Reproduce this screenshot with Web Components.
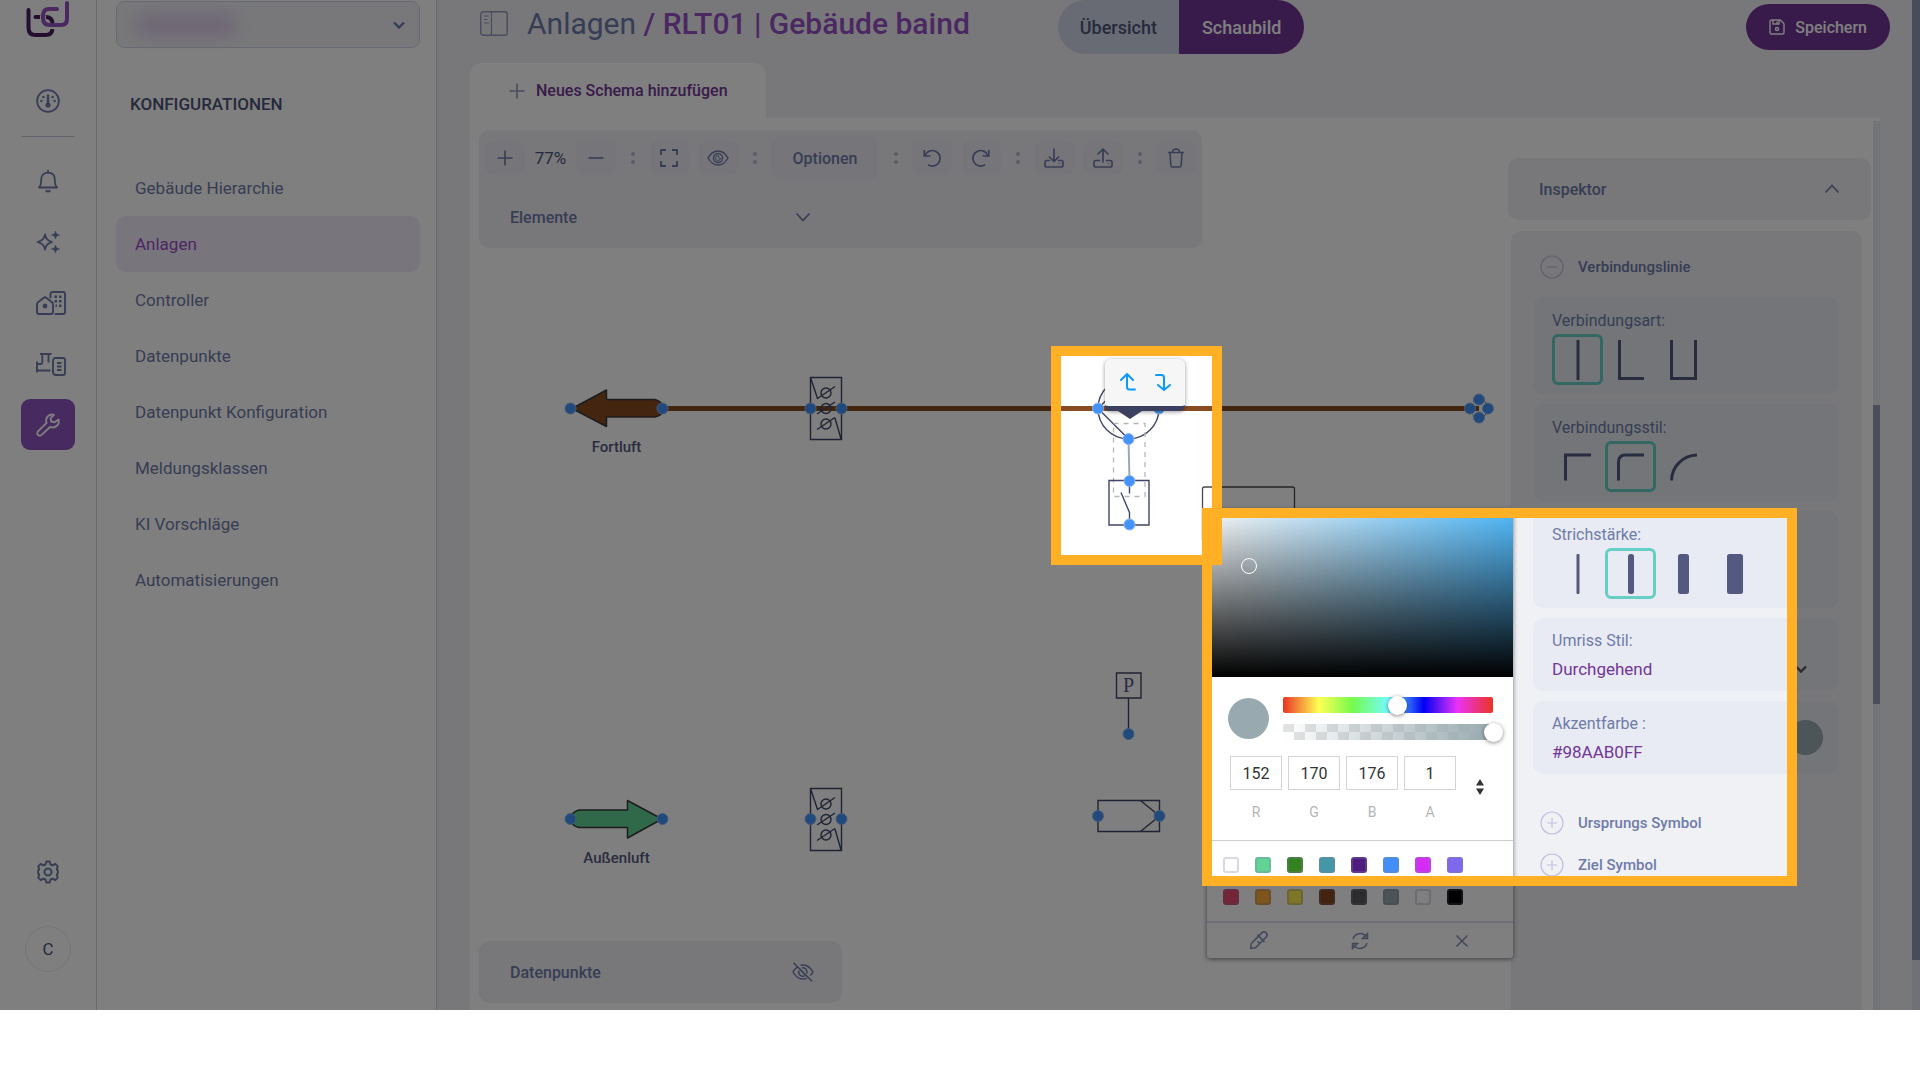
<!DOCTYPE html>
<html lang="de">
<head>
<meta charset="utf-8">
<title>Anlagen – Schaubild</title>
<style>
  :root {
    --ink: #6f7ba8;
    --ink-dark: #4d5479;
    --purple: #723696;
    --purple-light: #9650c4;
    --surface: #f0f1f5;
    --card: #e8ebf3;
    --line: #cfd6e8;
    --dot: #4393f9;
    --teal: #66cfc3;
  }
  body { margin: 0; background: #fff; font-family: Roboto, "Liberation Sans", sans-serif; font-size: 16px; color: var(--ink); }
</style>
</head>
<body>
<app-shell>
  <nav-rail></nav-rail>
  <side-nav></side-nav>
  <app-main></app-main>
  <spot-light slot="overlay"></spot-light>
</app-shell>

<script>
const RESET = `
  :host, *, *::before, *::after { box-sizing: border-box; }
  button, input, select { font: inherit; color: inherit; border: 0; background: none; margin: 0; padding: 0; border-radius: 0; outline: 0; }
  a { color: inherit; text-decoration: none; }
`;

function define(name, markup, setup) {
  const template = document.createElement('template');
  customElements.define(name, class extends HTMLElement {
    connectedCallback() {
      if (this.shadowRoot) return;
      template.innerHTML = typeof markup === 'function' ? markup(this) : markup;
      const root = this.attachShadow({ mode: 'open' });
      root.innerHTML = `<style>${RESET}</style>`;
      root.append(template.content.cloneNode(true));
      if (setup) setup(this, root);
    }
  });
}

/* ---------- icons: [viewBox width, viewBox height, stroke width, body] ---------- */
const ICONS = {
  logo: [44, 38, 4, `<g stroke-linecap="round" stroke-linejoin="round"><path stroke="#4b1f62" d="M2.500 10v18q0 7 7 7h10q7 0 7-7v-4q0-7-7-7H9.500"/><path stroke="#fff" stroke-width="6" d="M17 17v2q0 7 7 7h12"/><path stroke="#9650c4" d="M31 9h-8q-6 0-6 7v2q0 7 7 7h11q6 0 6-6V3"/></g>`],
  gauge: [24, 24, 1.8, `<circle cx="12" cy="12" r="10.900"/><circle cx="12" cy="16" r="1.700" fill="currentColor"/><path stroke-width="2.400" stroke-linecap="round" d="M12 6.500v9"/><g fill="currentColor" stroke="none"><circle cx="5.400" cy="12" r="1.200"/><circle cx="7.400" cy="8" r="1.200"/><circle cx="16.600" cy="8" r="1.200"/><circle cx="18.600" cy="12" r="1.200"/></g>`],
  bell: [24, 24, 1.8, `<path stroke-linejoin="round" d="M3 18.500c1.500-1.500 2.200-3.500 2.200-8C5.200 6 8 3.600 12 3.600s6.800 2.400 6.800 6.900c0 4.500.7 6.500 2.200 8z"/><path stroke-linecap="round" d="M12 1.600v1.500M10.200 21.800q1.800 1.400 3.600 0"/>`],
  sparkle: [24, 24, 1.8, `<path stroke-linejoin="round" d="M9 4.500c1 4.500 2.500 6 7 7.500-4.500 1.500-6 3-7 7.500C8 15 6.500 13.500 1.500 12 6.500 10.500 8 9 9 4.500z"/><path fill="currentColor" stroke-width=".6" d="M19.500 1c.5 2.500 1.200 3.300 4 4-2.800.7-3.500 1.500-4 4-.5-2.500-1.200-3.300-4-4 2.800-.7 3.500-1.500 4-4zM19.500 15c.5 2.500 1.200 3.300 4 4-2.800.7-3.500 1.500-4 4-.5-2.500-1.200-3.300-4-4 2.800-.7 3.500-1.500 4-4z"/>`],
  buildings: [30, 24, 1.9, `<g stroke-linejoin="round"><path d="M1 13.500q0-1.500 1-2.300l5.500-4.300q1.500-1.200 3 0l5.500 4.300q1 .8 1 2.300V21q0 2-2 2H3q-2 0-2-2z"/><path stroke-linecap="round" d="M14.500 6.500V3q0-2 2-2H27q2 0 2 2v18q0 2-2 2h-7.500"/></g><g fill="currentColor" stroke="none"><circle cx="9" cy="15" r="2.400"/><path d="M18.500 4.500H21V7h-2.500zM23 4.500h2.500V7H23zM18.500 9H21v2.500h-2.500zM23 9h2.500v2.500H23zM19.500 13.500H21V16h-1.500zM23 13.500h2.500V16H23z"/></g>`],
  plant: [30, 24, 1.9, `<path d="M4 2h11.500M6.300 2v8.500q0 1.500-1.500 1.500H1M12.500 2v8.500M1 9.500v11M1 18.500h13.500"/><path stroke-linejoin="round" d="M18.500 6H27q2 0 2 2v13q0 2-2 2h-7q-2.500 0-3-2.500V9q0-2 1.500-3zM21 11h4.500M21 14.500h4.500M21 18h4.500"/>`],
  wrench: [24, 24, 1.9, `<path stroke-linejoin="round" d="M22.500 6.500a6 6 0 0 1-8.200 7.300l-8.700 8.100a2.500 2.500 0 0 1-3.600-3.500l8.600-8.600A6 6 0 0 1 18 1.800l-3.400 3.400.6 3.300 3.500.8z"/>`],
  gear: [24, 24, 2, `<circle cx="12" cy="12" r="3.500"/><path stroke-linejoin="round" d="M10.300 1.500h3.400l.8 3 2 .9 2.700-1.500 2.500 2.500-.8 2.900.9 1.500v2.400l-.9 1.500.8 2.900-2.500 2.500-2.700-1.500-2 .9-.8 3h-3.400l-.8-3-2-.9-2.700 1.500-2.500-2.500.8-2.900-.9-1.500v-2.400l.9-1.500-.8-2.900 2.500-2.500 2.700 1.500 2-.9z"/>`],
  panel: [28, 25, 1.4, `<rect x=".8" y=".8" width="26.400" height="23.400" rx="2.500"/><path d="M11.500 1v23M4 5h5M4 8.500h3.500M4 12h5" stroke-width="1.200"/>`],
  plus: [16, 16, 1.6, `<path d="M8 .5v15M.5 8h15"/>`],
  minus: [16, 16, 1.6, `<path d="M.5 8h15"/>`],
  expand: [18, 18, 1.8, `<path d="M1 6V1h5M12 1h5v5M17 12v5h-5M6 17H1v-5"/>`],
  eye: [22, 18, 1.5, `<path stroke-linejoin="round" d="M1 9c2.500-4.500 6-7 10-7s7.500 2.500 10 7c-2.500 4.500-6 7-10 7S3.500 13.500 1 9z"/><circle cx="11" cy="9" r="4.500"/><path d="M11.300 6.500a2.500 2.500 0 1 0 2.200 3q-2.200.2-2.200-3z" stroke-width="1"/>`],
  eyeoff: [22, 20, 1.5, `<path d="M5.500 4.800C3.700 6 2.200 7.800 1 10c2.500 4.500 6 7 10 7q2 0 4-.9M8.500 3.300Q9.700 3 11 3c4 0 7.500 2.500 10 7q-1.100 2-2.700 3.500"/><path d="M14.800 11.500a4.200 4.200 0 0 0-5-5.500M7 8.500a4.200 4.200 0 0 0 6 5.200M1.500.8l18.500 18.500M8.500 8l5 5"/>`],
  undo: [18, 18, 1.7, `<path d="M1.200 1v6h6.300"/><path d="M2 6.700A7.800 7.800 0 1 1 5 15.800"/>`],
  redo: [18, 18, 1.7, `<path d="M16.800 1v6h-6.300"/><path d="M16 6.700A7.800 7.800 0 1 0 13 15.800"/>`],
  download: [20, 20, 1.7, `<path stroke-linejoin="round" d="M10 .5v13M5 8.500l5 5 5-5M6 12.500H2.800Q1 12.500 1 14.300v2.900Q1 19 2.800 19h14.400q1.800 0 1.800-1.800v-2.900q0-1.800-1.800-1.800H14"/><circle cx="15.800" cy="15.800" r=".3" stroke-width="1"/>`],
  upload: [20, 20, 1.7, `<path stroke-linejoin="round" d="M10 14.500V1M4.500 6.500L10 1l5.500 5.500M7 12.500H2.800Q1 12.500 1 14.300v2.900Q1 19 2.800 19h14.400q1.800 0 1.800-1.800v-2.900q0-1.800-1.800-1.800H13"/><circle cx="15.800" cy="15.800" r=".3" stroke-width="1"/>`],
  trash: [18, 20, 1.6, `<path stroke-linejoin="round" d="M1 4.500h16M5.500 4.500Q5.500 1 9 1t3.500 3.500M3 4.500l.8 13q.1 1.500 1.600 1.500h7.200q1.500 0 1.600-1.500l.8-13"/>`],
  down: [22, 16, 1.6, `<path d="M4.500 4.500L11 11.500l6.500-7"/>`],
  up: [22, 16, 1.6, `<path d="M4.500 11.500L11 4.500l6.500 7"/>`],
  chevron: [12, 12, 2.4, `<path d="M1 3.500l5 5 5-5"/>`],
  save: [16, 16, 1.4, `<path stroke-linejoin="round" d="M1 2.500Q1 1 2.500 1h8.800L15 4.700v8.800q0 1.500-1.500 1.500h-11Q1 15 1 13.500zM4 1v4h6V1M8 5V2.500"/><circle cx="8" cy="10" r="1.500"/>`],
  circleminus: [24, 24, 1.2, `<circle cx="12" cy="12" r="11"/><path d="M7 12h10"/>`],
  circleplus: [24, 24, 1.2, `<circle cx="12" cy="12" r="11"/><path d="M7 12h10M12 7v10"/>`],
  dropper: [18, 18, 1.5, `<g transform="rotate(45 9 9)" stroke-linejoin="round" stroke-linecap="round"><path d="M6 5V.5a3 3 0 0 1 6 0V5M4.500 5h9M6 5.500v10L9 19.500l3-4v-10M12 9.500H9.500"/></g>`],
  refresh: [18, 18, 1.5, `<path d="M2 7A7.300 7.300 0 0 1 15.500 5.500M16 11A7.300 7.300 0 0 1 2.500 12.500"/><path d="M16.500 1.500v5h-5zM1.500 16.500v-5h5z"/>`],
  close: [14, 14, 1.5, `<path d="M1.500 1.500l11 11M12.500 1.500l-11 11"/>`],
  sort: [8, 16, 0, `<path fill="currentColor" d="M0 6.500L4 0l4 6.500zM0 9.500L4 16l4-6.500z"/>`],
  straight: [26, 40, 3, `<path d="M13 0v40"/>`],
  corner: [26, 40, 3, `<path d="M1.500 0v38.500H26"/>`],
  ushape: [27, 40, 3, `<path d="M1.500 0v38.500h24V0"/>`],
  sharp: [27, 40, 3, `<path d="M1.500 33.500V8H27"/>`],
  rounded: [27, 40, 3, `<path d="M1.500 33.500V15q0-7 7-7H27"/>`],
  curve: [27, 40, 3, `<path d="M1.500 33.500C2 20 12 8.500 27 8"/>`],
  w1: [26, 40, 0, `<rect x="11.500" width="3" height="40" rx="1" fill="currentColor"/>`],
  w2: [26, 40, 0, `<rect x="10" width="6" height="40" rx="2.500" fill="currentColor"/>`],
  w3: [26, 40, 0, `<rect x="7" width="11" height="40" rx="2.500" fill="currentColor"/>`],
  w4: [26, 40, 0, `<rect x="3" width="16" height="40" rx="2.500" fill="currentColor"/>`],
  branchup: [16, 18, 2, `<path stroke-linecap="round" stroke-linejoin="round" d="M1 6l6-6 6 6M7 0v13q0 2.500 2.500 2.500H15"/>`],
  branchdown: [16, 18, 2, `<path stroke-linecap="round" stroke-linejoin="round" d="M3 11l6 5 6-5M9 16V3.500q0-2.500-2.500-2.500H1"/>`],
};
define('app-icon', el => {
  const [w, h, sw, body] = ICONS[el.getAttribute('name')];
  return `<style>:host{display:inline-flex;flex:none}svg{display:block;overflow:visible}</style>
  <svg width="${w}" height="${h}" viewBox="0 0 ${w} ${h}" fill="none" stroke="${sw ? 'currentColor' : 'none'}" stroke-width="${sw}" aria-hidden="true">${body}</svg>`;
});

/* ---------- shell ---------- */
define('app-shell', `
<style>
  :host { display: flex; position: relative; height: calc(100vh - 70px); overflow: hidden; }
</style>
<slot></slot><slot name="overlay"></slot>`);

define('nav-rail', `
<style>
  :host { flex: none; display: flex; width: 97px; border-right: 1px solid var(--line); }
  nav { flex: 1; display: flex; flex-direction: column; align-items: center; padding-bottom: 38px; }
  a { display: flex; align-items: center; width: 54px; height: 51px; margin-bottom: 10px; padding-left: 15px; border-radius: 9px; }
  .home { height: 33px; margin-bottom: 42px; padding-left: 5px; align-items: flex-start; }
  hr { width: 54px; border: 0; border-top: 1px solid #c5c9d6; margin: 0 0 18px; }
  .active { background: #8e54be; color: #fff; }
  .gear { margin-top: auto; margin-bottom: 29px; }
  .avatar { width: 46px; height: 46px; border: 1px solid #ececec; border-radius: 50%; color: var(--ink-dark); font-size: 17px; }
</style>
<nav aria-label="Hauptnavigation">
  <a class="home" href="#"><app-icon name="logo"></app-icon></a>
  <a href="#"><app-icon name="gauge"></app-icon></a>
  <hr>
  <a href="#"><app-icon name="bell"></app-icon></a>
  <a href="#"><app-icon name="sparkle"></app-icon></a>
  <a href="#"><app-icon name="buildings"></app-icon></a>
  <a href="#"><app-icon name="plant"></app-icon></a>
  <a class="active" href="#"><app-icon name="wrench"></app-icon></a>
  <a class="gear" href="#"><app-icon name="gear"></app-icon></a>
  <button class="avatar">C</button>
</nav>`);

define('side-nav', `
<style>
  :host { flex: none; display: block; width: 340px; padding: 1px 16px 0 19px; border-right: 1px solid var(--line); }
  .site { position: relative; display: flex; align-items: center; }
  select { appearance: none; width: 100%; height: 47px; border: 1px solid var(--line); border-radius: 8px; background: var(--surface); }
  .blur { position: absolute; left: 20px; width: 100px; height: 18px; border-radius: 8px; background: #d8c2e8; filter: blur(9px); }
  .site app-icon { position: absolute; right: 15px; }
  h2 { margin: 43px 0 43px 14px; font-size: 17px; line-height: 26px; font-weight: 500; color: var(--ink-dark); }
  nav { display: flex; flex-direction: column; }
  a { display: block; line-height: 56px; padding: 0 19px; border-radius: 9px; font-size: 17px; }
  .active { background: #f3eafa; color: var(--purple-light); }
</style>
<label class="site"><select aria-label="Standort"></select><span class="blur"></span><app-icon name="chevron"></app-icon></label>
<h2>KONFIGURATIONEN</h2>
<nav aria-label="Konfigurationen">
  <a href="#">Gebäude Hierarchie</a>
  <a href="#" class="active">Anlagen</a>
  <a href="#">Controller</a>
  <a href="#">Datenpunkte</a>
  <a href="#">Datenpunkt Konfiguration</a>
  <a href="#">Meldungsklassen</a>
  <a href="#">KI Vorschläge</a>
  <a href="#">Automatisierungen</a>
</nav>`);

/* ---------- main column ---------- */
define('app-main', `
<style>
  :host { flex: 1; min-width: 0; display: flex; background: var(--surface); }
  .col { flex: 1; min-width: 0; display: flex; flex-direction: column; }
  .tab { align-self: flex-start; display: flex; align-items: center; gap: 11px; height: 55px; margin-left: 33px; padding: 0 38px 0 39px; border-radius: 12px 12px 0 0; background: #fff; color: var(--purple); font-weight: 500; }
  .tab app-icon { color: #8f9bbd; }
  schema-panel { flex: 1; margin: 0 32px 0 33px; }
  .bar { flex: none; width: 8px; background: #dfe3ee; }
  .bar i { display: block; height: 95%; background: #8e98b2; }
</style>
<div class="col">
  <page-header></page-header>
  <button class="tab"><app-icon name="plus"></app-icon>Neues Schema hinzufügen</button>
  <schema-panel></schema-panel>
</div>
<div class="bar"><i></i></div>`);

define('page-header', `
<style>
  :host { flex: none; display: flex; align-items: center; height: 63px; padding: 0 22px 9px 43px; }
  .title { display: flex; align-items: center; gap: 19px; padding-bottom: 7px; }
  .title app-icon { color: #8f9bbd; }
  h1 { margin: 0; font-size: 30px; line-height: 36px; font-weight: 400; white-space: nowrap; }
  b { font-weight: 500; color: var(--purple-light); }
  .seg { display: flex; margin-left: 88px; font-size: 18px; font-weight: 500; }
  .seg button { height: 54px; padding: 0 22px; border-radius: 27px 0 0 27px; background: #d2d7e8; color: var(--ink-dark); }
  .seg button + button { padding: 0 23px; border-radius: 0 27px 27px 0; background: var(--purple); color: #fff; }
  .save { display: flex; align-items: center; gap: 10px; height: 46px; margin-left: auto; padding: 0 23px; border-radius: 23px; background: var(--purple); color: #fff; font-weight: 500; }
</style>
<div class="title"><app-icon name="panel"></app-icon><h1>Anlagen <b>/ RLT01 | Gebäude baind</b></h1></div>
<div class="seg"><button>Übersicht</button><button>Schaubild</button></div>
<button class="save"><app-icon name="save"></app-icon>Speichern</button>`);

define('schema-panel', `
<style>
  :host { position: relative; display: flex; min-height: 0; background: #fff; }
  schema-canvas { position: absolute; inset: 0; }
  .left { position: relative; flex: 1; display: flex; flex-direction: column; align-items: flex-start; justify-content: space-between; padding: 12px 9px 7px; }
  inspector-panel { position: relative; flex: none; width: 363px; margin: 40px 2px 0 0; }
  .bar { flex: none; width: 7px; margin-top: 3px; background: #e6e8f1; display: flex; flex-direction: column; }
  .bar i { margin-top: 284px; height: 299px; background: #959db5; }
  color-picker { position: absolute; right: 367px; top: 391px; }
</style>
<schema-canvas></schema-canvas>
<div class="left"><schema-toolbar></schema-toolbar><fold-bar icon="eyeoff">Datenpunkte</fold-bar></div>
<inspector-panel></inspector-panel>
<div class="bar"><i></i></div>
<color-picker></color-picker>`);

define('fold-bar', el => `
<style>
  :host { display: block; width: 363px; border-radius: 10px; background: var(--surface); }
  button { display: flex; align-items: center; justify-content: space-between; width: 100%; height: 62px; padding: 0 28px 0 31px; font-weight: 500; }
</style>
<button><slot></slot><app-icon name="${el.getAttribute('icon')}"></app-icon></button>`);

define('tool-button', el => `
<style>:host{display:block}button{display:flex;align-items:center;justify-content:center;width:40px;height:34px;border-radius:8px;background:#ecedf4}</style>
<button aria-label="${el.getAttribute('label')}"><app-icon name="${el.getAttribute('icon')}"></app-icon></button>`);

define('tool-separator', `
<style>:host{display:flex;flex-direction:column;align-items:center;gap:4px;width:15px}i{width:4px;height:4px;border-radius:50%;background:#b3bbd0}</style>
<i></i><i></i>`);

define('schema-toolbar', `
<style>
  :host { display: flex; flex-direction: column; gap: 6px; padding-top: 6px; border-radius: 10px; background: var(--surface); }
  .row { display: flex; align-items: center; gap: 9px; padding: 0 6px; }
  output { width: 33px; text-align: center; font-size: 17px; color: var(--ink-dark); }
  .opt { width: 108px; height: 44px; border-radius: 10px; background: #ecedf4; font-weight: 500; }
</style>
<div class="row">
  <tool-button icon="plus" label="Vergrößern"></tool-button>
  <output>77%</output>
  <tool-button icon="minus" label="Verkleinern"></tool-button>
  <tool-separator></tool-separator>
  <tool-button icon="expand" label="Vollbild"></tool-button>
  <tool-button icon="eye" label="Vorschau"></tool-button>
  <tool-separator></tool-separator>
  <button class="opt">Optionen</button>
  <tool-separator></tool-separator>
  <tool-button icon="undo" label="Rückgängig"></tool-button>
  <tool-button icon="redo" label="Wiederholen"></tool-button>
  <tool-separator></tool-separator>
  <tool-button icon="download" label="Importieren"></tool-button>
  <tool-button icon="upload" label="Exportieren"></tool-button>
  <tool-separator></tool-separator>
  <tool-button icon="trash" label="Löschen"></tool-button>
</div>
<fold-bar icon="down">Elemente</fold-bar>`);

/* ---------- diagram ---------- */
const dots = pts => pts.map(([x, y]) => `<circle class="dot" cx="${x}" cy="${y}" r="5.500"/>`).join('');
const damper = y => `<g transform="translate(810 ${y})"><path class="ln" d="M.5.500h31v62H.5zM.5.500l7 21L25 9.500M7 37l18-12M7 52.500l18-12M25 41l6 21"/><circle class="ln" cx="16" cy="16" r="5"/><circle class="ln" cx="16" cy="31.500" r="5"/><circle class="ln" cx="16" cy="47" r="5"/></g>`;
define('schema-canvas', `
<style>
  :host { display: block; overflow: hidden; }
  svg { display: block; width: 100%; height: 100%; }
  .dot { fill: var(--dot); stroke: #8fb8ee; stroke-width: 1; }
  .ln { fill: none; stroke: #3f4666; stroke-width: 1.4; }
  .pipe { stroke: #884c20; stroke-width: 5; }
  text { font-size: 15px; font-weight: 500; fill: #545880; text-anchor: middle; }
  .sym { font-family: "Liberation Serif", serif; font-size: 20px; font-weight: 400; }
  .tip { position: absolute; left: 635px; top: 241px; display: flex; flex-direction: column; align-items: center; }
  .tip div { display: flex; align-items: center; justify-content: center; gap: 19px; width: 80px; height: 52px; border-radius: 6px; border-bottom: 5px solid #3c4060; background: #f6f6f7; color: #0a99ff; box-shadow: 0 1px 4px #0006; }
  .tip::after { content: ""; margin-left: -30px; border: 12px solid transparent; border-top: 8px solid #3c4060; border-bottom: 0; }
</style>
<svg role="img" aria-label="Schaubild der Anlage">
  <g transform="translate(-470 -118)">
    <path class="pipe" d="M663 408.500H1479"/>
    <path fill="#884a1f" stroke="#3a3a3a" stroke-width="1.500" stroke-linejoin="round" d="M572 408.500l34.500-18.500v9.500H655q8 2 8 9t-8 8.500h-48.500v9.500z"/>
    <text x="616.500" y="452">Fortluft</text>
    ${damper(377)}
    ${dots([[570.5, 408.5], [662.5, 408.5], [810.5, 408.5], [841.5, 408.5]])}
    <circle cx="1479" cy="408.500" r="9" fill="none" stroke="#3a3a3a" stroke-dasharray="3 3"/>
    ${dots([[1470, 408.5], [1488, 408.5], [1479, 399.500], [1479, 417.500]])}

    <circle class="ln" cx="1128.500" cy="408.500" r="30.500"/>
    <path class="ln" d="M1128.500 439L1098 408.500L1128.500 378"/>
    <path d="M1128.500 439L1129.500 481" stroke="#98aab0" stroke-width="2"/>
    <rect x="1113.500" y="423.500" width="31.500" height="73" fill="none" stroke="#b5b5bd" stroke-width="1.300" stroke-dasharray="5 5"/>
    <path class="ln" d="M1109 480.500h40v44.500h-40zM1129.500 480.500v13M1121 492.500l8.500 20v12.500"/>
    ${dots([[1098, 408.5], [1159, 408.5], [1128.500, 439], [1129.500, 481], [1129.500, 524.500]])}
    <rect x="1202.500" y="487" width="92" height="54" rx="2" fill="none" stroke="#4a4a4e" stroke-width="1.300"/>

    <path class="ln" d="M1116.500 673h24.500v25h-24.500zM1128.500 698v36"/>
    <text class="sym" x="1128.500" y="692">P</text>
    <path class="ln" d="M1098 800.500h61.500v31H1098zM1140.500 800.500l19 15.500-19 15.500"/>
    ${dots([[1128.500, 734], [1098, 816], [1159.500, 816]])}

    <path fill="#61d394" stroke="#3a3a3a" stroke-width="1.500" stroke-linejoin="round" d="M662 819l-34.500-18.500v9.500H579q-8 2-8 9t8 8.500h48.500v10.500z"/>
    <text x="616.500" y="863">Außenluft</text>
    ${damper(788)}
    ${dots([[570.5, 819], [662.5, 819], [810.5, 819], [841.5, 819]])}
  </g>
</svg>
<div class="tip"><div><app-icon name="branchup"></app-icon><app-icon name="branchdown"></app-icon></div></div>`);

/* ---------- inspector ---------- */
define('option-group', el => {
  const group = el.getAttribute('label');
  const selected = Number(el.getAttribute('selected'));
  return `
<style>
  :host { display: block; }
  fieldset { min-width: 0; margin: 0; height: 97px; padding: 0 19px; border: 0; border-radius: 10px; background: var(--card); }
  legend { float: left; width: 100%; padding: 13px 0 2px; line-height: 22px; }
  .opts { clear: both; display: flex; gap: 2px; }
  label { display: flex; align-items: center; justify-content: center; width: 51px; height: 51px; border: 3px solid transparent; border-radius: 6px; color: #53597f; }
  label:has(:checked) { border-color: var(--teal); }
  input { appearance: none; position: absolute; }
</style>
<fieldset><legend>${group}:</legend><div class="opts">${el.getAttribute('icons').split(' ').map((n, i) =>
    `<label><input type="radio" name="o" aria-label="${group} ${i + 1}"${i === selected ? ' checked' : ''}><app-icon name="${n}"></app-icon></label>`).join('')}</div></fieldset>`;
});

define('section-toggle', el => `
<style>
  :host { display: block; }
  button { display: flex; align-items: center; gap: 14px; height: 24px; padding: 0; font-size: 15px; font-weight: 500; }
  app-icon { color: #c3bfe0; }
</style>
<button><app-icon name="${el.getAttribute('icon')}"></app-icon><slot></slot></button>`);

define('inspector-panel', `
<style>
  :host { display: flex; flex-direction: column; gap: 11px; }
  fold-bar { width: 100%; }
  .body { flex: 1; display: flex; flex-direction: column; gap: 10px; margin: 0 9px 0 3px; padding: 24px 23px 0 22px; border-radius: 10px 10px 0 0; background: var(--surface); }
  section-toggle { padding-left: 7px; }
  .first { margin-bottom: 8px; }
  .field { position: relative; display: flex; align-items: center; height: 73px; padding: 0 16px 0 19px; border-radius: 10px; background: var(--card); }
  .field label { flex: 1; display: flex; flex-direction: column; gap: 4px; padding-top: 2px; }
  .field span { line-height: 22px; }
  select, input { appearance: none; width: 100%; height: 26px; font-size: 17px; color: var(--purple); }
  .field app-icon { color: #55555c; padding-top: 28px; padding-right: 16px; }
  .chip { width: 35px; height: 35px; border-radius: 50%; background: #98aab0; }
  .more { display: flex; flex-direction: column; gap: 18px; padding-top: 27px; }
</style>
<fold-bar icon="up">Inspektor</fold-bar>
<div class="body">
  <section-toggle class="first" icon="circleminus">Verbindungslinie</section-toggle>
  <option-group label="Verbindungsart" icons="straight corner ushape" selected="0"></option-group>
  <option-group label="Verbindungsstil" icons="sharp rounded curve" selected="1"></option-group>
  <option-group label="Strichstärke" icons="w1 w2 w3 w4" selected="1"></option-group>
  <div class="field"><label><span>Umriss Stil:</span><select><option>Durchgehend</option></select></label><app-icon name="chevron"></app-icon></div>
  <div class="field"><label><span>Akzentfarbe :</span><input value="#98AAB0FF"></label><button class="chip" aria-label="Farbe wählen"></button></div>
  <div class="more">
    <section-toggle icon="circleplus">Ursprungs Symbol</section-toggle>
    <section-toggle icon="circleplus">Ziel Symbol</section-toggle>
  </div>
</div>`);

/* ---------- colour picker ---------- */
const SWATCHES = ['#ffffff', '#61d394', '#35801f', '#4397a6', '#4f1b7e', '#4190f9', '#d62cf5', '#7d68ee',
  '#ec4a72', '#fdac38', '#faea4e', '#84461e', '#585858', '#98a8ae', '#ffffff', '#000000'];
define('color-picker', `
<style>
  :host { display: block; width: 306px; background: #fff; border-radius: 3px; box-shadow: 0 1px 5px #0008; }
  .field { position: relative; height: 168px; border-radius: 3px 3px 0 0; background: linear-gradient(to top, #000, transparent), linear-gradient(to right, #fff, #55beff); }
  .field i { position: absolute; left: 34px; top: 49px; width: 16px; height: 16px; border: 1px solid #fff; border-radius: 50%; }
  .mix { display: flex; align-items: center; gap: 14px; padding: 20px 20px 0 21px; }
  .now { flex: none; width: 41px; height: 41px; border-radius: 50%; background: #98aab0; }
  .bars { flex: 1; display: flex; flex-direction: column; gap: 11px; }
  .bar { display: flex; height: 16px; border-radius: 2px; }
  .hue { background: linear-gradient(to right, #eb3323, #ffff54 17%, #75fb4c 33%, #75fbfd 50%, #0000f5 67%, #ea33f7 83%, #eb3323); }
  .alpha { background: linear-gradient(to right, transparent, #98aab0), repeating-conic-gradient(#fff 0 25%, #e3e3e3 0 50%) 0 0 / 22px 16px; }
  input[type=range] { appearance: none; flex: 1; height: 16px; margin: 0 -10px; background: transparent; }
  input[type=range]::-webkit-slider-thumb { appearance: none; width: 19px; height: 19px; border-radius: 50%; background: #fff; box-shadow: 0 1px 4px #0007; }
  .nums { display: flex; align-items: center; padding: 16px 29px 0 23px; }
  .nums label { display: flex; flex-direction: column; align-items: center; gap: 12px; margin-right: 6px; font-size: 14px; line-height: 20px; color: #b4b4b4; }
  .nums input { width: 52px; height: 34px; border: 1px solid #d4d4d4; text-align: center; font-size: 16px; color: #333; }
  .nums button { margin-left: auto; color: #333; }
  .swatches { display: grid; grid-template-columns: repeat(8, 16px); gap: 16px; margin-top: 18px; padding: 16px; border-top: 1px solid #ccc; }
  .swatches button { width: 16px; height: 16px; border: 2px solid #7a80a84d; border-radius: 3px; }
  footer { display: flex; height: 37px; border-top: 2px solid #dcdeec; color: #8290b4; }
  footer button { flex: 1; display: flex; align-items: center; justify-content: center; }
</style>
<div class="field"><i></i></div>
<div class="mix">
  <span class="now"></span>
  <div class="bars">
    <div class="bar hue"><input type="range" min="0" max="360" value="196" aria-label="Farbton"></div>
    <div class="bar alpha"><input type="range" min="0" max="100" value="100" aria-label="Deckkraft"></div>
  </div>
</div>
<div class="nums">
  <label><input value="152">R</label><label><input value="170">G</label><label><input value="176">B</label><label><input value="1">A</label>
  <button aria-label="Farbmodell wechseln"><app-icon name="sort"></app-icon></button>
</div>
<div class="swatches">${SWATCHES.map(c => `<button aria-label="${c}" style="background-color:${c}"></button>`).join('')}</div>
<footer>
  <button aria-label="Pipette"><app-icon name="dropper"></app-icon></button>
  <button aria-label="Zurücksetzen"><app-icon name="refresh"></app-icon></button>
  <button aria-label="Schließen"><app-icon name="close"></app-icon></button>
</footer>`);

/* ---------- dimmed overlay with two highlighted areas ---------- */
define('spot-light', `
<style>
  :host { position: absolute; inset: 0; pointer-events: none; }
  svg { display: block; width: 100%; height: 100%; }
</style>
<svg aria-hidden="true">
  <mask id="holes"><rect width="100%" height="100%" fill="#fff"/><rect x="1060" y="355" width="153" height="201"/><rect x="1211" y="517" width="577" height="360"/></mask>
  <rect width="100%" height="100%" fill="#000" fill-opacity=".5" mask="url(#holes)"/>
  <g fill="none" stroke="#ffb024" stroke-width="10"><rect x="1207" y="513" width="585" height="368"/><rect x="1056" y="351" width="161" height="209"/></g>
</svg>`);
</script>
</body>
</html>
